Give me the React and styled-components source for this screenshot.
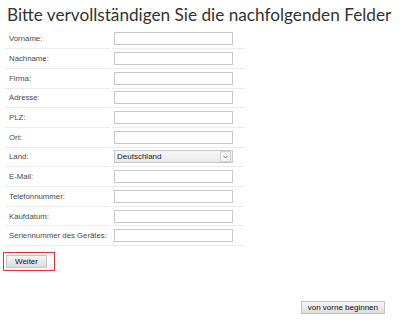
import React from "react";
import styled, { createGlobalStyle } from "styled-components";

const Global = createGlobalStyle`
  html, body { margin: 0; padding: 0; background: #fff; }
  body { width: 400px; height: 320px; overflow: hidden; font-family: "Liberation Sans", Arial, sans-serif; }
`;

const Page = styled.div`
  display: flex;
  flex-direction: column;
  padding: 3px 5px 0 5px;
  height: 317px;
  box-sizing: border-box;
`;

const Title = styled.h1`
  margin: 0 0 0 2px;
  font-family: "Lato", "DejaVu Sans", sans-serif;
  font-weight: normal;
  font-size: 17.2px;
  color: #333;
  line-height: 24px;
  white-space: nowrap;
`;

const Form = styled.div`
  display: grid;
  grid-template-columns: 105px 133px;
  column-gap: 2px;
  margin-top: 2.5px;
  width: 240px;
`;

const Cell = styled.div`
  height: 18.7px;
  border-bottom: 1px solid #ececec;
  display: flex;
  align-items: center;
  padding-left: ${(p) => (p.$label ? "4px" : "2px")};
  font-size: 7.8px;
  color: #4a4a4a;
  white-space: nowrap;
`;

const Input = styled.div`
  width: 117px;
  height: 11px;
  border: 1px solid #c8c8c8;
  background: #fff;
`;

const Select = styled.div`
  height: 11px;
  width: 115px;
  padding-left: 2px;
  border: 1px solid #c8c8c8;
  background: linear-gradient(#f7f7f7, #e9e9e9);
  display: flex;
  align-items: center;
  justify-content: space-between;
  font-size: 8px;
  color: #222;
`;

const Arrow = styled.div`
  width: 9px;
  height: 9px;
  margin-right: 1px;
  border: 1px solid #d0d0d0;
  background: #f4f4f4;
  display: flex;
  align-items: center;
  justify-content: center;
`;

const Highlight = styled.div`
  margin-top: 6px;
  margin-left: -2px;
  width: 48px;
  height: 17px;
  border: 1.5px solid #e5323f;
  display: flex;
  align-items: center;
  padding-left: 2px;
  box-sizing: content-box;
`;

const Button = styled.div`
  display: flex;
  align-items: center;
  justify-content: center;
  height: 11px;
  padding: 0 ${(p) => p.$pad || 6}px;
  border: 1px solid #c4c4c4;
  background: linear-gradient(#f6f6f6, #dcdcdc);
  font-size: 8px;
  color: #111;
  white-space: nowrap;
`;

const Footer = styled.div`
  margin-top: auto;
  display: flex;
  justify-content: flex-end;
  padding-right: 10px;
  padding-bottom: 3px;
`;

const fields = [
  "Vorname:",
  "Nachname:",
  "Firma:",
  "Adresse:",
  "PLZ:",
  "Ort:",
  "Land:",
  "E-Mail:",
  "Telefonnummer:",
  "Kaufdatum:",
  "Seriennummer des Gerätes:",
];

export default function App() {
  return (
    <>
      <Global />
      <Page>
        <Title>Bitte vervollständigen Sie die nachfolgenden Felder</Title>
        <Form>
          {fields.map((f) => (
            <React.Fragment key={f}>
              <Cell $label>{f}</Cell>
              <Cell>
                {f === "Land:" ? (
                  <Select>
                    <span>Deutschland</span>
                    <Arrow>
                      <svg width="5" height="4" viewBox="0 0 5 4">
                        <path d="M0.5 0.8 L2.5 3 L4.5 0.8" fill="none" stroke="#777" strokeWidth="1" />
                      </svg>
                    </Arrow>
                  </Select>
                ) : (
                  <Input />
                )}
              </Cell>
            </React.Fragment>
          ))}
        </Form>
        <Highlight>
          <Button $pad={8}>Weiter</Button>
        </Highlight>
        <Footer>
          <Button $pad={6}>von vorne beginnen</Button>
        </Footer>
      </Page>
    </>
  );
}
